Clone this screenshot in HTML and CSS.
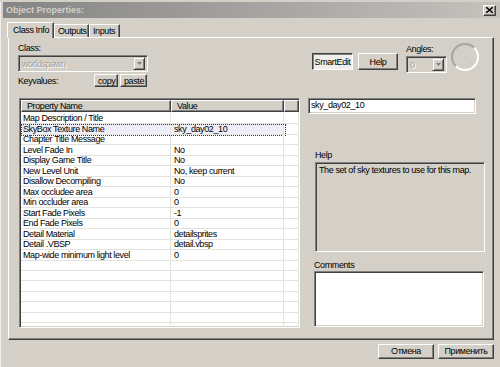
FILE: index.html
```html
<!DOCTYPE html>
<html lang="en">
<head>
    <meta charset="UTF-8">
    <title>Object Properties</title>
    <link rel="stylesheet" href="styles.css">
</head>
<body>
<div class="window">
    <div class="titlebar">
        <span class="title">Object Properties:</span>
        <span class="close">
            <svg width="7" height="6" viewBox="0 0 7 6"><path d="M0 0 L7 6 M7 0 L0 6" stroke="#000" stroke-width="1.4"/></svg>
        </span>
    </div>

    <div class="tabs">
        <div class="tab active">Class Info</div>
        <div class="tab">Outputs</div>
        <div class="tab">Inputs</div>
    </div>

    <div class="panel">
        <div class="head">
            <div class="class-box">
                <div class="label">Class:</div>
                <div class="combo disabled">
                    <span class="combo-text">worldspawn</span>
                    <span class="combo-btn"><svg width="5" height="3" viewBox="0 0 5 3"><path d="M0 0 H5 L2.5 3 Z" fill="#808080"/></svg></span>
                </div>
                <div class="kv-row">
                    <span>Keyvalues:</span>
                    <div class="kv-btns">
                        <button class="btn small">copy</button>
                        <button class="btn small">paste</button>
                    </div>
                </div>
            </div>
            <div class="tools">
                <button class="btn pressed smartedit">SmartEdit</button>
                <button class="btn help">Help</button>
                <div class="angles">
                    <div class="label">Angles:</div>
                    <div class="combo disabled angle-combo">
                        <span class="combo-text">0</span>
                        <span class="combo-btn"><svg width="5" height="3" viewBox="0 0 5 3"><path d="M0 0 H5 L2.5 3 Z" fill="#808080"/></svg></span>
                    </div>
                </div>
                <div class="dial"><span class="dot"></span></div>
            </div>
        </div>

        <div class="body">
            <div class="grid-frame">
                <div class="grid-head">
                    <div class="hcell">Property Name</div>
                    <div class="hcell">Value</div>
                    <div class="hcell"></div>
                </div>
                <div id="rows"></div>
            </div>

            <div class="side">
                <div class="edit">sky_day02_10</div>
                <div class="side-label help-label">Help</div>
                <div class="help-box">The set of sky textures to use for this map.</div>
                <div class="side-label comments-label">Comments</div>
                <div class="comments-box"></div>
            </div>
        </div>
    </div>

    <div class="footer">
        <button class="btn foot">Отмена</button>
        <button class="btn foot">Применить</button>
    </div>
</div>

<script>
    // Keyvalues of worldspawn
    const props = [
        ["Map Description / Title", ""],
        ["SkyBox Texture Name", "sky_day02_10"],
        ["Chapter Title Message", ""],
        ["Level Fade In", "No"],
        ["Display Game Title", "No"],
        ["New Level Unit", "No, keep current"],
        ["Disallow Decompiling", "No"],
        ["Max occludee area", "0"],
        ["Min occluder area", "0"],
        ["Start Fade Pixels", "-1"],
        ["End Fade Pixels", "0"],
        ["Detail Material", "detailsprites"],
        ["Detail .VBSP", "detail.vbsp"],
        ["Map-wide minimum light level", "0"]
    ];

    const rows = document.getElementById('rows');
    for (let i = 0; i < props.length + 7; i++) {
        const p = props[i] || ["", ""];
        const row = document.createElement('div');
        row.className = 'row' + (i === 1 ? ' selected' : '');
        row.innerHTML = `<div class="cell">${p[0]}</div><div class="cell">${p[1]}</div><div class="cell"></div>`;
        rows.appendChild(row);
    }
</script>
</body>
</html>
```

FILE: styles.css
```css
* {
    box-sizing: border-box;
}
body {
    margin: 0;
    width: 500px;
    height: 367px;
    overflow: hidden;
    background-color: #d4d0c8;
    font-family: "Liberation Sans", Arial, sans-serif;
    font-size: 9px;
    letter-spacing: -0.4px;
    color: #000;
}
.window {
    height: 367px;
    border-left: 1px solid #f0eeea;
}
.titlebar {
    margin: 2px 0 0 2px;
    height: 16px;
    display: flex;
    align-items: center;
    justify-content: space-between;
    padding: 0 4px 0 3px;
    background: linear-gradient(to right, #848484, #c4c2bd);
}
.title {
    font-weight: bold;
    letter-spacing: 0;
    color: #d4d0c8;
}
.close {
    width: 13px;
    height: 11px;
    display: flex;
    align-items: center;
    justify-content: center;
    background-color: #d4d0c8;
    border: 1px solid;
    border-color: #fff #404040 #404040 #fff;
    box-shadow: inset -1px -1px #808080;
}
.tabs {
    display: flex;
    align-items: flex-end;
    height: 19px;
    padding-left: 6px;
}
.tab {
    height: 13px;
    line-height: 12px;
    padding: 0 0 0 3px;
    white-space: nowrap;
    overflow: hidden;
    background-color: #d4d0c8;
    border: 1px solid;
    border-bottom: none;
    border-color: #fff #404040 #404040 #fff;
    box-shadow: inset -1px 0 #808080;
}
.tab:nth-child(2) { width: 35px; }
.tab:nth-child(3) { width: 31px; }
.tab.active {
    width: 47px;
    height: 16px;
    padding-left: 5px;
    line-height: 14px;
    margin-bottom: -1px;
    position: relative;
    z-index: 1;
}
.panel {
    margin-left: 7px;
    width: 486px;
    height: 303px;
    padding: 4px 8px 0 9px;
    border: 1px solid;
    border-color: #fff #404040 #404040 #fff;
    box-shadow: inset -1px -1px #808080;
}
.head {
    display: flex;
    height: 56px;
}
.class-box {
    width: 130px;
}
.label {
    line-height: 13px;
    height: 13px;
}
.combo {
    height: 17px;
    border: 1px solid;
    border-color: #808080 #fff #fff #808080;
    box-shadow: inset 1px 1px #404040, inset -1px -1px #d4d0c8;
    display: flex;
    align-items: center;
    padding: 0 2px 0 3px;
}
.combo.disabled .combo-text {
    color: #a09d96;
    text-shadow: 1px 1px #fff;
    flex: 1;
}
.combo-btn {
    width: 12px;
    height: 13px;
    display: flex;
    align-items: center;
    justify-content: center;
    border: 1px solid;
    border-color: #d4d0c8 #404040 #404040 #d4d0c8;
    box-shadow: inset 1px 1px #fff, inset -1px -1px #808080;
}
.kv-row {
    display: flex;
    justify-content: space-between;
    align-items: center;
    margin-top: 2px;
    height: 13px;
}
.kv-btns {
    display: flex;
    gap: 2px;
    margin-right: 1px;
}
.btn {
    font: inherit;
    letter-spacing: inherit;
    color: #000;
    background-color: #d4d0c8;
    padding: 0;
    border: 1px solid;
    border-color: #fff #404040 #404040 #fff;
    box-shadow: inset -1px -1px #808080;
}
.btn.small {
    height: 13px;
    line-height: 10px;
    padding: 0 3px;
}
.btn.small:first-child { width: 24px; }
.btn.small:last-child { width: 27px; }
.tools {
    margin-left: auto;
    display: flex;
    align-items: flex-start;
}
.smartedit, .help {
    height: 17px;
    margin-top: 11px;
}
.smartedit {
    width: 41px;
    background-color: #efeeea;
    border-color: #404040 #fff #fff #404040;
    box-shadow: inset 1px 1px #808080;
}
.help {
    width: 40px;
    margin-left: 5px;
}
.angles {
    margin-left: 8px;
    width: 41px;
}
.angles .label {
    height: 14px;
    line-height: 14px;
}
.dial {
    margin: 1px 6px 0 4px;
    width: 28px;
    height: 28px;
    border-radius: 50%;
    border: 2px solid;
    border-color: #a8a59e #fff #fff #a8a59e;
    display: flex;
    align-items: center;
    justify-content: center;
}
.dot {
    width: 1px;
    height: 1px;
    background-color: #b0ada6;
}
.body {
    display: flex;
}
.grid-frame {
    margin-left: 1px;
    width: 281px;
    height: 230px;
    overflow: hidden;
    background-color: #fff;
    border: 1px solid;
    border-color: #808080 #fff #fff #808080;
    box-shadow: inset 1px 1px #404040, inset -1px -1px #d4d0c8;
    padding: 1px 0 0 1px;
}
.grid-head {
    display: grid;
    grid-template-columns: 150px 113px 15px;
    height: 12px;
    margin-bottom: 1px;
}
.hcell {
    background-color: #d4d0c8;
    line-height: 10px;
    padding-left: 5px;
    border: 1px solid;
    border-color: #fff #404040 #404040 #fff;
    box-shadow: inset -1px -1px #808080;
}
.row {
    position: relative;
    display: grid;
    grid-template-columns: 150px 113px 15px;
    height: 10.5px;
}
.cell {
    line-height: 10px;
    padding-left: 2px;
    white-space: nowrap;
    border-right: 1px solid #e4e2dc;
    border-bottom: 1px solid #e4e2dc;
}
.cell:nth-child(2) {
    padding-left: 3px;
}
.row.selected .cell:nth-child(-n+2) {
    background-color: #eeeef8;
}
.row.selected::after {
    content: "";
    position: absolute;
    left: 0;
    top: 0;
    width: 263px;
    height: 10.5px;
    border: 1px dotted #333;
}
.side {
    margin-left: 8px;
    width: 177px;
}
.edit {
    width: 168px;
    height: 16px;
    line-height: 13px;
    padding-left: 2px;
    background-color: #fff;
    border: 1px solid;
    border-color: #808080 #fff #fff #808080;
    box-shadow: inset 1px 1px #404040, inset -1px -1px #d4d0c8;
}
.side-label {
    line-height: 13px;
    height: 13px;
}
.help-label {
    margin: 35px 0 0 7px;
}
.help-box {
    margin-left: 7px;
    width: 170px;
    height: 90px;
    padding: 2px 3px;
    line-height: 11px;
    border: 1px solid;
    border-color: #808080 #fff #fff #808080;
    box-shadow: inset 1px 1px #404040, inset -1px -1px #d4d0c8;
}
.comments-label {
    margin: 8px 0 0 6px;
    height: 11px;
    line-height: 11px;
}
.comments-box {
    margin-left: 6px;
    width: 170px;
    height: 56px;
    background-color: #fff;
    border: 1px solid;
    border-color: #808080 #fff #fff #808080;
    box-shadow: inset 1px 1px #404040, inset -1px -1px #d4d0c8;
}
.footer {
    display: flex;
    justify-content: flex-end;
    gap: 4px;
    margin-top: 4px;
    width: 493px;
}
.btn.foot {
    width: 56px;
    height: 15px;
    line-height: 11px;
}
```
